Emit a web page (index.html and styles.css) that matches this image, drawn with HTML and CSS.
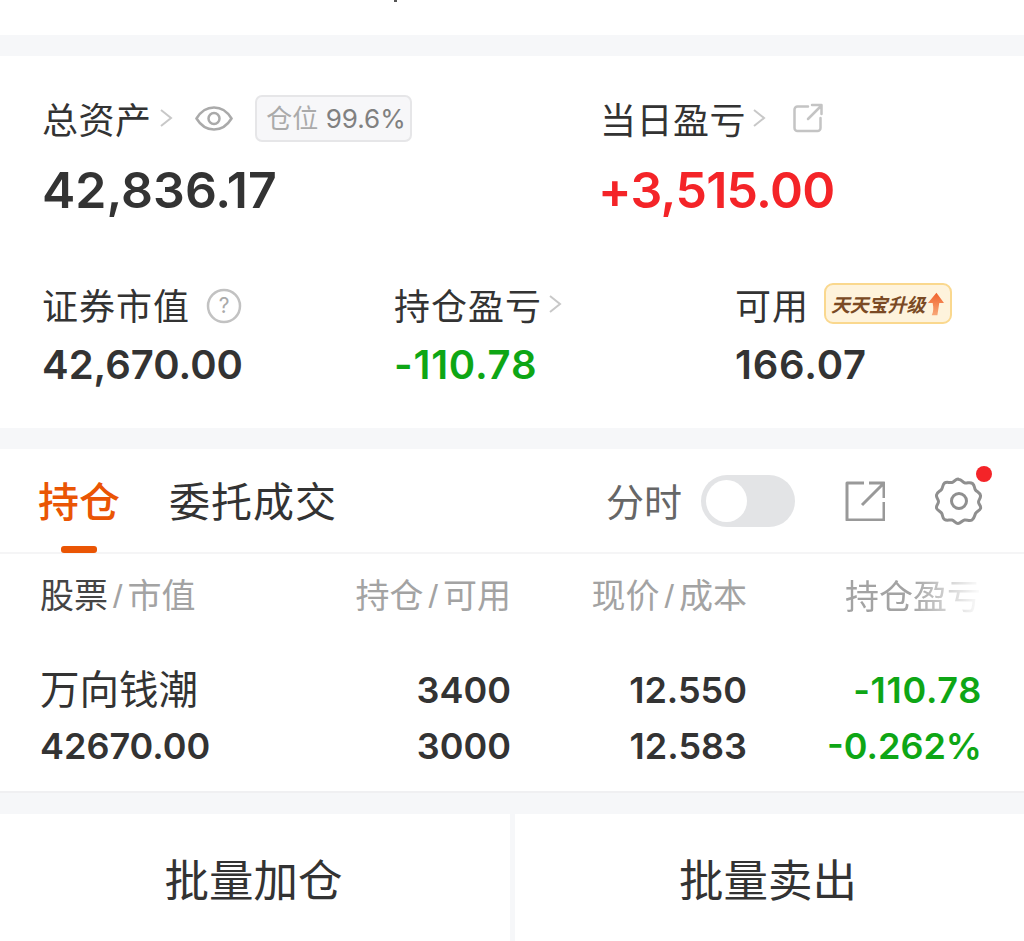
FILE: index.html
```html
<!DOCTYPE html>
<html lang="zh">
<head>
<meta charset="utf-8">
<title>持仓</title>
<link rel="stylesheet" href="styles.css">
</head>
<body>
<div class="top"><span class="top-mark"></span></div>
<section class="summary">
  <div class="main-row">
    <div class="stat">
      <div class="label-row">
        <span class="label">总资产</span>
        <svg class="chev" viewBox="0 0 14 20"><path d="M2 2l10 8-10 8"/></svg>
        <svg class="eye" viewBox="0 0 38 27"><path d="M1.500 13.500C6 6 12 2.500 19 2.500S32 6 36.500 13.500C32 21 26 24.500 19 24.500S6 21 1.500 13.500Z"/><circle cx="19" cy="13.500" r="5.500"/></svg>
        <span class="chip"><span class="chip-cn">仓位</span> 99.6%</span>
      </div>
      <div class="big">42,836.17</div>
    </div>
    <div class="stat">
      <div class="label-row">
        <span class="label">当日盈亏</span>
        <svg class="chev chev-tight" viewBox="0 0 14 20"><path d="M2 2l10 8-10 8"/></svg>
        <svg class="share-sm" viewBox="0 0 30 30"><path d="M15 3.500H4.500a3 3 0 0 0-3 3V25a3 3 0 0 0 3 3h20a3 3 0 0 0 3-3V15M15 16L28 3M19 2h9.500v9"/></svg>
      </div>
      <div class="big red">+3,515.00</div>
    </div>
  </div>
  <div class="sub-row">
    <div class="stat">
      <div class="label-row">
        <span class="label spaced">证券市值</span>
        <svg class="help" viewBox="0 0 36 36"><circle cx="18" cy="18" r="16"/><text x="18" y="25" text-anchor="middle">?</text></svg>
      </div>
      <div class="mid">42,670.00</div>
    </div>
    <div class="stat">
      <div class="label-row">
        <span class="label spaced">持仓盈亏</span>
        <svg class="chev chev-tight" viewBox="0 0 14 20"><path d="M2 2l10 8-10 8"/></svg>
      </div>
      <div class="mid green wide">-110.78</div>
    </div>
    <div class="stat">
      <div class="label-row">
        <span class="label spaced">可用</span>
        <span class="promo">天天宝升级<svg class="promo-arrow" viewBox="0 0 18 24"><defs><linearGradient id="promoArrow" x1="0" y1="0" x2="0" y2="1"><stop offset="0" stop-color="#f0622c"/><stop offset="1" stop-color="#f8a878"/></linearGradient></defs><path d="M10 0l8 11h-5l-2 13H5c2-4 2-8 1-13H1z" fill="url(#promoArrow)"/></svg></span>
      </div>
      <div class="mid wide">166.07</div>
    </div>
  </div>
</section>
<section class="positions">
  <div class="tabs">
    <span class="tab active">持仓</span>
    <span class="tab">委托成交</span>
    <div class="tools">
      <span class="tool-label">分时</span>
      <span class="toggle"><span class="knob"></span></span>
      <svg class="share-lg" viewBox="0 0 40 40"><path d="M19 2H2v37h37V21M17 24L38 3M24 2h15v15"/></svg>
      <span class="gear-wrap">
        <svg class="gear" viewBox="0 0 48 48"><path d="M24 2.500c2.500 0 3.500 3 6 3.500s5-1.500 7.500.5 1.500 4.500 3 6.500 4.500 2.500 5 5.500-2 4-2 6.500 3 4 2 6.500-4 3-5 5-1 5-3.500 6.500-5-.5-7.500 0-4 3.500-6.500 3.500-3.500-3-6-3.500-5 1-7.500-.5-1.500-4.500-3-6.500-4.500-2.500-5-5 2-4 2-6.500-2.500-3.500-2-6.500 3.500-3.500 5-5.500 1-5 3-6.500 5 0 7.500-.5 3.500-3.500 6-3.500Z"/><circle cx="24" cy="24" r="7.500"/></svg>
        <span class="dot"></span>
      </span>
    </div>
  </div>
  <div class="table-head">
    <span class="th-first"><b>股票</b><i>/</i>市值</span>
    <span class="th">持仓<i>/</i>可用</span>
    <span class="th">现价<i>/</i>成本</span>
    <span class="th fade">持仓盈亏</span>
  </div>
  <div class="table-row">
    <span class="name">万向钱潮</span>
    <span class="num">3400</span>
    <span class="num">12.550</span>
    <span class="num green loss">-110.78</span>
    <span class="num left">42670.00</span>
    <span class="num">3000</span>
    <span class="num">12.583</span>
    <span class="num green">-0.262%</span>
  </div>
</section>
<section class="actions">
  <span class="action">批量加仓</span>
  <span class="action">批量卖出</span>
</section>
</body>
</html>
```
FILE: styles.css
```css
* { box-sizing: border-box; }
html, body { margin: 0; padding: 0; }
body {
  width: 1024px;
  height: 941px;
  overflow: hidden;
  background: #f6f7f9;
  color: #333;
  font-family: Inter, "Noto Sans CJK SC", sans-serif;
}
svg { display: block; flex: none; fill: none; }

.top { height: 35px; background: #fff; padding-left: 394px; }
.top-mark { display: block; width: 3px; height: 2px; background: #555; }

.summary { margin-top: 21px; height: 372px; background: #fff; padding: 39px 0 0 42px; }
.main-row { display: flex; height: 186px; }
.main-row .stat:first-child { flex: none; width: 558px; }
.sub-row { display: flex; }
.sub-row .stat:nth-child(1) { width: 352px; }
.sub-row .stat:nth-child(2) { width: 341px; }

.label-row { display: flex; align-items: center; height: 46px; }
.label { font: 400 36px/46px "Noto Sans CJK SC", sans-serif; letter-spacing: 0.500px; color: #333; }
.spaced { letter-spacing: 1px; }
.chev { width: 14px; height: 20px; margin-left: 7px; }
.chev path { stroke: #c8c8c8; stroke-width: 2; }
.chev-tight { margin-left: 6px; }
.sub-row .chev-tight { margin-left: 6px; }
.eye { width: 38px; height: 27px; margin-left: 22px; }
.eye path, .eye circle { stroke: #aaa; stroke-width: 2.500; }
.chip {
  margin-left: 22px;
  width: 157px;
  height: 47px;
  padding-left: 6px;
  border: 2px solid #e6e6e8;
  border-radius: 7px;
  background: #f7f7f9;
  color: #808080;
  font: 400 26px/43px Inter, "Noto Sans CJK SC", sans-serif;
  text-align: center;
  white-space: nowrap;
}
.chip-cn { color: #aaa; }
.share-sm { width: 30px; height: 30px; margin-left: 27px; }
.share-sm path { stroke: #c4c4c4; stroke-width: 2.500; stroke-linecap: round; stroke-linejoin: round; }

.big { margin-top: 16px; font-size: 50px; line-height: 66px; font-weight: 600; color: #333; }
.big.red { margin-left: -2px; letter-spacing: -0.700px; }
.mid { margin-top: 13px; font-size: 40px; line-height: 50px; font-weight: 600; color: #333; }
.red { color: #f42428; }
.green { color: #0ea615; }
.mid.green { color: #0ea615; }
.wide { letter-spacing: 0.800px; }

.help { width: 36px; height: 36px; margin-left: 16px; margin-top: 3px; }
.help circle { stroke: #c2c2c2; stroke-width: 2.500; }
.help text { fill: #aaa; font: 400 21px Inter, sans-serif; }

.promo {
  display: flex;
  align-items: center;
  margin-left: 15px;
  margin-bottom: 1px;
  width: 128px;
  height: 41px;
  padding-left: 5px;
  border: 2px solid #fad88e;
  border-radius: 9px;
  background: #fef3dc;
  color: #7a4a24;
  font: italic 700 19px/37px "Noto Sans CJK SC", sans-serif;
  letter-spacing: -0.200px;
  white-space: nowrap;
}
.promo-arrow { width: 17px; height: 24px; margin-left: 2px; }

.positions { margin-top: 21px; height: 344px; background: #fff; border-bottom: 2px solid #f0f0f2; }
.tabs { display: flex; align-items: flex-start; height: 105px; padding-left: 38px; border-bottom: 2px solid #f5f5f6; }
.tab {
  position: relative;
  margin-top: 21px;
  margin-right: 49px;
  font: 400 41px/58px "Noto Sans CJK SC", sans-serif;
  letter-spacing: 1px;
  color: #333;
}
.tab.active { font-weight: 500; color: #ea5504; letter-spacing: 0; }
.tab.active::after {
  content: "";
  position: absolute;
  left: 23px;
  top: 76px;
  width: 36px;
  height: 7px;
  border-radius: 3px;
  background: #ea5504;
}
.tools { display: flex; align-items: center; height: 104px; margin-left: auto; padding-right: 41px; }
.tool-label { margin-top: -2px; font: 400 38px/50px "Noto Sans CJK SC", sans-serif; color: #666; }
.toggle { display: block; width: 94px; height: 52px; margin-left: 19px; padding: 5px; border-radius: 26px; background: #e3e4e6; }
.knob { display: block; width: 41px; height: 42px; border-radius: 50%; background: #fff; }
.share-lg { width: 40px; height: 40px; margin-left: 50px; }
.share-lg path { stroke: #999; stroke-width: 3; stroke-linejoin: round; }
.gear-wrap { position: relative; margin-left: 50px; }
.gear { width: 48px; height: 48px; }
.gear path, .gear circle { stroke: #8f8f8f; stroke-width: 3; }
.dot { position: absolute; right: -9px; top: -11px; width: 16px; height: 16px; border-radius: 50%; background: #f42428; }

.table-head, .table-row { display: grid; grid-template-columns: 236px 235px 236px 235px; padding-left: 40px; }
.table-head { height: 82px; align-items: center; font: 400 34px/44px "Noto Sans CJK SC", sans-serif; color: #a3a3a3; }
.table-head i { padding: 0 5px; font-style: normal; font-family: "Liberation Sans", sans-serif; color: #a3a3a3; }
.th-first b { font-weight: 400; color: #444; }
.th { text-align: right; }
.fade { padding-right: 1px; -webkit-mask-image: linear-gradient(90deg, #000 70%, transparent 100%); mask-image: linear-gradient(90deg, #000 70%, transparent 100%); }
.table-row { grid-auto-rows: 56px; align-items: center; padding-top: 26px; }
.name { padding-bottom: 6px; font: 400 39.500px/50px "Noto Sans CJK SC", sans-serif; color: #333; }
.num { text-align: right; font-size: 36px; line-height: 56px; font-weight: 600; white-space: nowrap; }
.num.loss { letter-spacing: 0.700px; }
.num.left { text-align: left; }

.actions { display: flex; gap: 5px; margin-top: 21px; height: 127px; }
.action {
  flex: 1;
  padding-right: 3px;
  background: #fff;
  text-align: center;
  font: 400 44.500px/128px "Noto Sans CJK SC", sans-serif;
  color: #333;
}
.action:first-child { flex: none; width: 510px; }
```
